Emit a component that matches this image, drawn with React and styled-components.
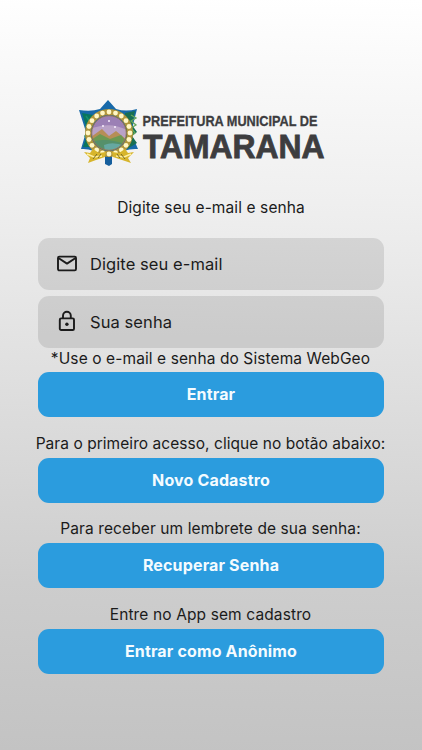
import React, { useState } from 'react';
import styled, { createGlobalStyle } from 'styled-components';

const GlobalStyle = createGlobalStyle`
  * {
    box-sizing: border-box;
  }

  body {
    margin: 0;
    font-family: Inter, 'Liberation Sans', sans-serif;
    color: #1b1b1b;
  }
`;

// Styled Components
const Screen = styled.main`
  height: 750px;
  padding: 98px 38px 0;
  background: linear-gradient(181deg, #ffffff 0%, #f7f7f7 13%, #efefef 27%, #e5e5e5 42%, #d9d9d9 60%, #cdcdcd 78%, #c3c3c3 100%);
  display: flex;
  flex-direction: column;
  overflow: hidden;
`;

const Logo = styled.svg`
  display: block;
  flex: none;
  width: 254px;
  height: 70px;
  margin-left: 39px;
  overflow: visible;
`;

const LogoText = styled.text`
  font-family: 'Liberation Sans', Arial, sans-serif;
  font-weight: 700;
  font-size: ${props => props.$size}px;
  fill: #3d3d3f;
  stroke: #3d3d3f;
  stroke-width: ${props => props.$stroke}px;
`;

const Message = styled.p`
  margin: 0 -19px 0 -20px;
  height: ${props => props.$height || 20}px;
  line-height: 21px;
  font-size: 15.5px;
  font-weight: 430;
  letter-spacing: ${props => props.$spacing ?? 0.1}px;
  text-align: center;
  white-space: nowrap;
`;

const Intro = styled(Message)`
  margin-top: 29px;
  margin-bottom: 21px;
  margin-right: -20px;
`;

const Form = styled.form`
  display: flex;
  flex-direction: column;
`;

const Field = styled.label`
  height: 52px;
  margin-bottom: ${props => (props.$last ? 0 : 5.5)}px;
  padding: 0 18px 0 17px;
  display: flex;
  align-items: center;
  gap: 11px;
  background: rgba(0, 0, 0, 0.1);
  border-radius: 11px;
`;

const FieldIcon = styled.svg`
  flex: none;
  width: 24px;
  height: 24px;
  fill: none;
  stroke: #1b1b1b;
  stroke-width: 1.9px;
  stroke-linejoin: round;
`;

const Input = styled.input`
  flex: 1;
  min-width: 0;
  padding: 0;
  border: none;
  outline: none;
  background: transparent;
  font-family: inherit;
  font-size: 16.5px;
  font-weight: 430;
  letter-spacing: 0.08px;
  color: #1b1b1b;

  &::placeholder {
    color: #1b1b1b;
    opacity: 1;
  }
`;

const Button = styled.button`
  height: 45px;
  padding: 0 0 1px;
  border: none;
  border-radius: 11px;
  background: #2b9cde;
  color: #f4fbff;
  font-family: inherit;
  font-size: 16px;
  font-weight: 700;
  letter-spacing: 0.15px;
  cursor: pointer;
`;

const Option = styled.section`
  display: flex;
  flex-direction: column;
  padding-top: 15.5px;
`;

// Ring of small flowers around the landscape of the coat of arms
const flowers = Array.from({ length: 20 }, (_, i) => {
  const angle = (i * Math.PI) / 10;
  return { x: 32 + 21 * Math.cos(angle), y: 35 + 21 * Math.sin(angle) };
});

const CityLogo = () => (
  <Logo viewBox="0 0 254 70" role="img" aria-label="Prefeitura Municipal de Tamarana">
    <path d="M31 2L39 11Q49 14 60 11L54 35L61 51Q48 50 37 58H26Q15 50 4 51L9 34L2 12Q14 14 23 11Z" fill="#1769a9" />
    <path d="M5 15L16 17L11 33L15 49L6 49L11 35Z" fill="#08765e" />
    <path d="M48 15L58 13L55 27L60 34L55 38L60 45L50 51Z" fill="#176f53" />
    <path d="M54 17l5 3-5 3 5 4-5 3 4 5-5 4" fill="none" stroke="#65a65a" strokeWidth="1.3" />
    <path d="M9 18l4 6-4 4 3 5-4 5 4 6" fill="none" stroke="#17906e" strokeWidth="1.5" />
    <path d="M28 55h7v11l-3 2-4-2Z" fill="#155e9d" />
    <circle cx="32" cy="35" r="21" fill="none" stroke="#b1963c" strokeWidth="6" />
    {flowers.map((flower, i) => (
      <circle key={i} cx={flower.x} cy={flower.y} r="2.4" fill="#fff7c6" />
    ))}
    <clipPath id="landscape">
      <circle cx="32" cy="35" r="17.3" />
    </clipPath>
    <g clipPath="url(#landscape)">
      <path d="M14 17h36v36H14Z" fill="#9b80b5" />
      <path d="M14 31Q32 23 50 32V40H14Z" fill="#b9a2c7" />
      <path d="M14 39L25 31L32 38L39 33L50 42V54H14Z" fill="#b68e57" />
      <path d="M14 42L23 36L33 41L44 37L50 44V54H14Z" fill="#6c9853" />
      <path d="M14 44Q30 39 50 47V54H14Z" fill="#55906a" />
      <path d="M27 47Q36 43 48 48L41 54H28Z" fill="#66a8a1" />
    </g>
    <g fill="#f8efff">
      <circle cx="32" cy="23" r="1" />
      <circle cx="26" cy="28" r="1" />
      <circle cx="38" cy="29" r="1" />
    </g>
    <circle cx="32" cy="35" r="17.3" fill="none" stroke="#9a754d" strokeWidth="1" />
    <path d="M7 54l6 1 3-4 6 4 7-1-1 5-9 3-8 3 2-5Z" fill="#d7b52c" />
    <path d="M57 54l-6 1-3-4-6 4-7-1 1 5 9 3 9 3-3-5Z" fill="#d7b52c" />
    <path d="M10 56l7 3 8-1M54 56l-7 3-8-1" fill="none" stroke="#fff0a0" strokeWidth="1.6" />
    <path d="M16 61l4-5M21 60l3-4M48 61l-4-5M43 60l-3-4" stroke="#776b27" strokeWidth="1" />
    <LogoText x="65.5" y="28" $size={14.8} $stroke={0.3} textLength="175" lengthAdjust="spacingAndGlyphs">
      PREFEITURA MUNICIPAL DE
    </LogoText>
    <LogoText x="66" y="60" $size={34} $stroke={0.9} textLength="181.5" lengthAdjust="spacingAndGlyphs">
      TAMARANA
    </LogoText>
  </Logo>
);

const MailIcon = () => (
  <FieldIcon viewBox="0 0 24 24">
    <rect x="3" y="4.6" width="18" height="13.8" rx="1.3" />
    <path d="M3.4 6L12 11.6L20.6 6" />
  </FieldIcon>
);

const LockIcon = () => (
  <FieldIcon viewBox="0 0 24 24">
    <rect x="4.8" y="8.4" width="14.2" height="11.6" rx="1.3" />
    <path d="M8 8.4V5.7a3.9 3.9 0 0 1 7.8 0v2.7" />
    <circle cx="11.9" cy="14.2" r="1.7" fill="#1b1b1b" stroke="none" />
  </FieldIcon>
);

const options = [
  { id: 'signup', message: 'Para o primeiro acesso, clique no botão abaixo:', spacing: 0.05, action: 'Novo Cadastro' },
  { id: 'recover', message: 'Para receber um lembrete de sua senha:', spacing: 0.1, action: 'Recuperar Senha' },
  { id: 'anonymous', message: 'Entre no App sem cadastro', spacing: 0.12, action: 'Entrar como Anônimo' },
];

const App = () => {
  const [email, setEmail] = useState('');
  const [password, setPassword] = useState('');

  const handleSubmit = (e) => {
    e.preventDefault();
  };

  return (
    <>
      <GlobalStyle />
      <Screen>
        <CityLogo />
        <Intro>Digite seu e-mail e senha</Intro>

        <Form onSubmit={handleSubmit}>
          <Field>
            <MailIcon />
            <Input
              type="email"
              placeholder="Digite seu e-mail"
              value={email}
              onChange={(e) => setEmail(e.target.value)}
            />
          </Field>
          <Field $last>
            <LockIcon />
            <Input
              type="password"
              placeholder="Sua senha"
              value={password}
              onChange={(e) => setPassword(e.target.value)}
            />
          </Field>
          <Message $height={24.5}>*Use o e-mail e senha do Sistema WebGeo</Message>
          <Button type="submit">Entrar</Button>
        </Form>

        {options.map((option) => (
          <Option key={option.id}>
            <Message $height={25} $spacing={option.spacing}>{option.message}</Message>
            <Button type="button">{option.action}</Button>
          </Option>
        ))}
      </Screen>
    </>
  );
};

export default App;
